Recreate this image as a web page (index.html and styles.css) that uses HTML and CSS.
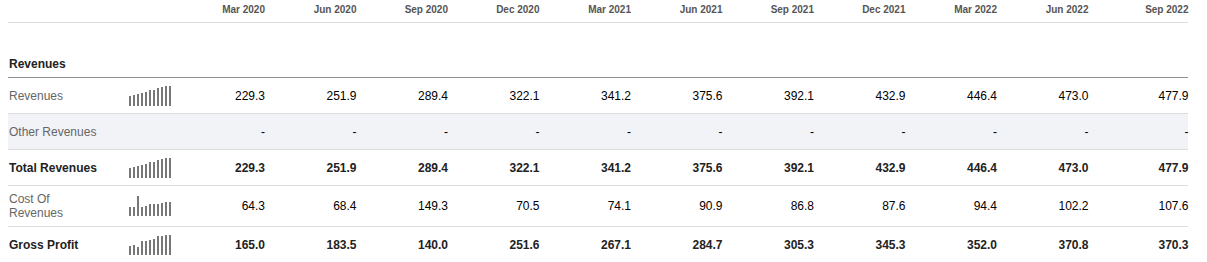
FILE: index.html
```html
<!DOCTYPE html>
<html lang="en">
<head>
  <meta charset="UTF-8">
  <meta name="viewport" content="width=device-width, initial-scale=1.0">
  <title>Income Statement</title>
  <link rel="stylesheet" href="styles.css">
</head>
<body>
  <div class="statement">

    <!-- Period headings -->
    <div class="row head">
      <div></div>
      <div></div>
      <div class="num">Mar 2020</div>
      <div class="num">Jun 2020</div>
      <div class="num">Sep 2020</div>
      <div class="num">Dec 2020</div>
      <div class="num">Mar 2021</div>
      <div class="num">Jun 2021</div>
      <div class="num">Sep 2021</div>
      <div class="num">Dec 2021</div>
      <div class="num">Mar 2022</div>
      <div class="num">Jun 2022</div>
      <div class="num">Sep 2022</div>
    </div>

    <div class="row section">
      <div class="label">Revenues</div>
    </div>

    <div class="row">
      <div class="label">Revenues</div>
      <div class="spark">
        <svg width="42" height="20" viewBox="0 0 42 20">
          <rect x="0" y="10" width="2" height="10"/>
          <rect x="4" y="9" width="2" height="11"/>
          <rect x="8" y="8" width="2" height="12"/>
          <rect x="12" y="7" width="2" height="13"/>
          <rect x="16" y="6" width="2" height="14"/>
          <rect x="20" y="4" width="2" height="16"/>
          <rect x="24" y="4" width="2" height="16"/>
          <rect x="28" y="2" width="2" height="18"/>
          <rect x="32" y="1" width="2" height="19"/>
          <rect x="36" y="0" width="2" height="20"/>
          <rect x="40" y="0" width="2" height="20"/>
        </svg>
      </div>
      <div class="num">229.3</div>
      <div class="num">251.9</div>
      <div class="num">289.4</div>
      <div class="num">322.1</div>
      <div class="num">341.2</div>
      <div class="num">375.6</div>
      <div class="num">392.1</div>
      <div class="num">432.9</div>
      <div class="num">446.4</div>
      <div class="num">473.0</div>
      <div class="num">477.9</div>
    </div>

    <div class="row shaded">
      <div class="label">Other Revenues</div>
      <div class="spark"></div>
      <div class="num">-</div>
      <div class="num">-</div>
      <div class="num">-</div>
      <div class="num">-</div>
      <div class="num">-</div>
      <div class="num">-</div>
      <div class="num">-</div>
      <div class="num">-</div>
      <div class="num">-</div>
      <div class="num">-</div>
      <div class="num">-</div>
    </div>

    <div class="row total">
      <div class="label">Total Revenues</div>
      <div class="spark">
        <svg width="42" height="20" viewBox="0 0 42 20">
          <rect x="0" y="10" width="2" height="10"/>
          <rect x="4" y="9" width="2" height="11"/>
          <rect x="8" y="8" width="2" height="12"/>
          <rect x="12" y="7" width="2" height="13"/>
          <rect x="16" y="6" width="2" height="14"/>
          <rect x="20" y="4" width="2" height="16"/>
          <rect x="24" y="4" width="2" height="16"/>
          <rect x="28" y="2" width="2" height="18"/>
          <rect x="32" y="1" width="2" height="19"/>
          <rect x="36" y="0" width="2" height="20"/>
          <rect x="40" y="0" width="2" height="20"/>
        </svg>
      </div>
      <div class="num">229.3</div>
      <div class="num">251.9</div>
      <div class="num">289.4</div>
      <div class="num">322.1</div>
      <div class="num">341.2</div>
      <div class="num">375.6</div>
      <div class="num">392.1</div>
      <div class="num">432.9</div>
      <div class="num">446.4</div>
      <div class="num">473.0</div>
      <div class="num">477.9</div>
    </div>

    <div class="row">
      <div class="label">Cost Of Revenues</div>
      <div class="spark">
        <svg width="42" height="20" viewBox="0 0 42 20">
          <rect x="0" y="11" width="2" height="9"/>
          <rect x="4" y="11" width="2" height="9"/>
          <rect x="8" y="0" width="2" height="20"/>
          <rect x="12" y="11" width="2" height="9"/>
          <rect x="16" y="10" width="2" height="10"/>
          <rect x="20" y="8" width="2" height="12"/>
          <rect x="24" y="8" width="2" height="12"/>
          <rect x="28" y="8" width="2" height="12"/>
          <rect x="32" y="7" width="2" height="13"/>
          <rect x="36" y="6" width="2" height="14"/>
          <rect x="40" y="6" width="2" height="14"/>
        </svg>
      </div>
      <div class="num">64.3</div>
      <div class="num">68.4</div>
      <div class="num">149.3</div>
      <div class="num">70.5</div>
      <div class="num">74.1</div>
      <div class="num">90.9</div>
      <div class="num">86.8</div>
      <div class="num">87.6</div>
      <div class="num">94.4</div>
      <div class="num">102.2</div>
      <div class="num">107.6</div>
    </div>

    <div class="row total">
      <div class="label">Gross Profit</div>
      <div class="spark">
        <svg width="42" height="20" viewBox="0 0 42 20">
          <rect x="0" y="11" width="2" height="9"/>
          <rect x="4" y="10" width="2" height="10"/>
          <rect x="8" y="12" width="2" height="8"/>
          <rect x="12" y="6" width="2" height="14"/>
          <rect x="16" y="6" width="2" height="14"/>
          <rect x="20" y="5" width="2" height="15"/>
          <rect x="24" y="4" width="2" height="16"/>
          <rect x="28" y="1" width="2" height="19"/>
          <rect x="32" y="1" width="2" height="19"/>
          <rect x="36" y="0" width="2" height="20"/>
          <rect x="40" y="0" width="2" height="20"/>
        </svg>
      </div>
      <div class="num">165.0</div>
      <div class="num">183.5</div>
      <div class="num">140.0</div>
      <div class="num">251.6</div>
      <div class="num">267.1</div>
      <div class="num">284.7</div>
      <div class="num">305.3</div>
      <div class="num">345.3</div>
      <div class="num">352.0</div>
      <div class="num">370.8</div>
      <div class="num">370.3</div>
    </div>

  </div>
</body>
</html>
```

FILE: styles.css
```css
body {
  margin: 0 8px;
  font-family: "Liberation Sans", Arial, sans-serif;
  font-size: 12px;
  line-height: 14px;
  color: #000;
  background: #fff;
}

.statement {
  width: 1180px;
}

.row {
  display: grid;
  grid-template-columns: 112px 62px repeat(11, 91.5px);
  align-items: center;
  min-height: 35px;
  border-bottom: 1px solid #dddddd;
}

.row .label {
  padding: 6px 18px 6px 1px;
  color: #666;
}

.row .spark {
  padding-left: 9px;
  display: flex;
  align-items: center;
}

.spark svg {
  display: block;
  fill: #777;
}

.row .num {
  text-align: right;
  padding-right: 8.5px;
}

.row .num:last-child {
  padding-right: 0;
}

.head {
  min-height: 22px;
  height: 22px;
  align-items: start;
}

.head .num {
  padding-top: 4px;
  font-size: 10px;
  line-height: 12px;
  font-weight: bold;
  color: #555;
}

.section {
  min-height: 54px;
  height: 54px;
  align-items: end;
  border-bottom-color: #8c9191;
}

.section .label {
  grid-column: 1 / 3;
  font-weight: bold;
  color: #222;
}

.shaded {
  background: #f2f3f7;
}

.total .label,
.total .num {
  font-weight: bold;
  color: #222;
}
```
